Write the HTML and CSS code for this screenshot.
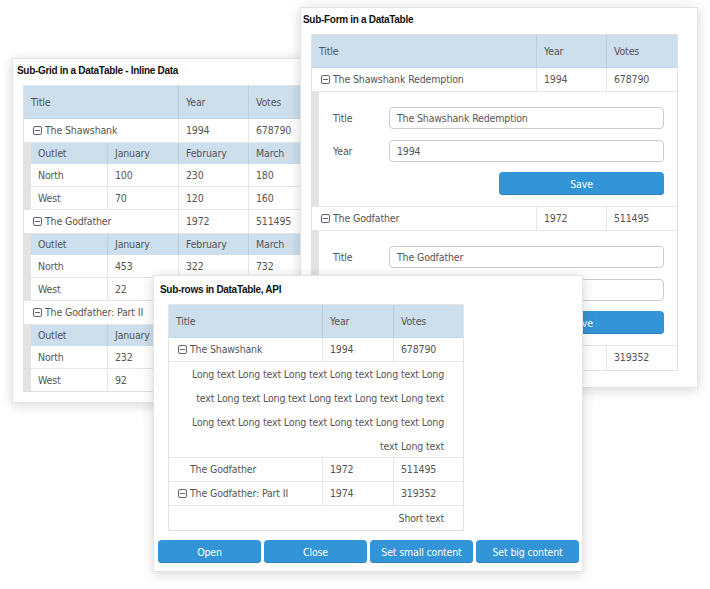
FILE: index.html
```html
<!DOCTYPE html>
<html>
<head>
<meta charset="utf-8">
<link rel="stylesheet" href="styles.css">
</head>
<body>
<div class="desk">

  <!-- Window 1: Sub-Grid -->
  <section class="win win1">
    <div class="wtitle">Sub-Grid in a DataTable - Inline Data</div>
    <div class="grid g1">
      <div class="hrow"><div class="c1">Title</div><div class="c2">Year</div><div class="c3">Votes</div></div>
      <div class="row"><div class="c1 ico"><svg class="ic" width="9" height="9" viewBox="0 0 9 9"><rect x="0.5" y="0.5" width="8" height="8" rx="1.5"/><line x1="2" y1="4.5" x2="7" y2="4.5"/></svg>The Shawshank</div><div class="c2">1994</div><div class="c3">678790</div></div>
      <div class="sub">
        <div class="bar"></div>
        <div class="inner">
          <div class="shrow"><div class="s1">Outlet</div><div class="s2">January</div><div class="s3">February</div><div class="s4">March</div></div>
          <div class="srow"><div class="s1">North</div><div class="s2">100</div><div class="s3">230</div><div class="s4">180</div></div>
          <div class="srow last"><div class="s1">West</div><div class="s2">70</div><div class="s3">120</div><div class="s4">160</div></div>
        </div>
      </div>
      <div class="row"><div class="c1 ico"><svg class="ic" width="9" height="9" viewBox="0 0 9 9"><rect x="0.5" y="0.5" width="8" height="8" rx="1.5"/><line x1="2" y1="4.5" x2="7" y2="4.5"/></svg>The Godfather</div><div class="c2">1972</div><div class="c3">511495</div></div>
      <div class="sub">
        <div class="bar"></div>
        <div class="inner">
          <div class="shrow"><div class="s1">Outlet</div><div class="s2">January</div><div class="s3">February</div><div class="s4">March</div></div>
          <div class="srow"><div class="s1">North</div><div class="s2">453</div><div class="s3">322</div><div class="s4">732</div></div>
          <div class="srow last"><div class="s1">West</div><div class="s2">22</div><div class="s3">75</div><div class="s4">120</div></div>
        </div>
      </div>
      <div class="row"><div class="c1 ico"><svg class="ic" width="9" height="9" viewBox="0 0 9 9"><rect x="0.5" y="0.5" width="8" height="8" rx="1.5"/><line x1="2" y1="4.5" x2="7" y2="4.5"/></svg>The Godfather: Part II</div><div class="c2">1974</div><div class="c3">319352</div></div>
      <div class="sub lastsub">
        <div class="bar"></div>
        <div class="inner">
          <div class="shrow"><div class="s1">Outlet</div><div class="s2">January</div><div class="s3">February</div><div class="s4">March</div></div>
          <div class="srow"><div class="s1">North</div><div class="s2">232</div><div class="s3">140</div><div class="s4">210</div></div>
          <div class="srow last"><div class="s1">West</div><div class="s2">92</div><div class="s3">85</div><div class="s4">67</div></div>
        </div>
      </div>
    </div>
  </section>

  <!-- Window 2: Sub-Form -->
  <section class="win win2">
    <div class="wtitle">Sub-Form in a DataTable</div>
    <div class="grid g2">
      <div class="hrow"><div class="c1">Title</div><div class="c2">Year</div><div class="c3">Votes</div></div>
      <div class="row"><div class="c1 ico"><svg class="ic" width="9" height="9" viewBox="0 0 9 9"><rect x="0.5" y="0.5" width="8" height="8" rx="1.5"/><line x1="2" y1="4.5" x2="7" y2="4.5"/></svg>The Shawshank Redemption</div><div class="c2">1994</div><div class="c3">678790</div></div>
      <div class="subform">
        <div class="bar"></div>
        <div class="form">
          <div class="frow"><label class="flabel">Title</label><div class="finput">The Shawshank Redemption</div></div>
          <div class="frow"><label class="flabel">Year</label><div class="finput">1994</div></div>
          <div class="fbtn"><button class="btn save">Save</button></div>
        </div>
      </div>
      <div class="row"><div class="c1 ico"><svg class="ic" width="9" height="9" viewBox="0 0 9 9"><rect x="0.5" y="0.5" width="8" height="8" rx="1.5"/><line x1="2" y1="4.5" x2="7" y2="4.5"/></svg>The Godfather</div><div class="c2">1972</div><div class="c3">511495</div></div>
      <div class="subform">
        <div class="bar"></div>
        <div class="form">
          <div class="frow"><label class="flabel">Title</label><div class="finput">The Godfather</div></div>
          <div class="frow"><label class="flabel">Year</label><div class="finput">1972</div></div>
          <div class="fbtn"><button class="btn save">Save</button></div>
        </div>
      </div>
      <div class="row lastrow"><div class="c1 ico"><svg class="ic" width="9" height="9" viewBox="0 0 9 9"><rect x="0.5" y="0.5" width="8" height="8" rx="1.5"/><line x1="2" y1="4.5" x2="7" y2="4.5"/></svg>The Godfather: Part II</div><div class="c2">1974</div><div class="c3">319352</div></div>
    </div>
  </section>

  <!-- Window 3: Sub-rows -->
  <section class="win win3">
    <div class="wtitle">Sub-rows in DataTable, API</div>
    <div class="grid g3">
      <div class="hrow"><div class="c1">Title</div><div class="c2">Year</div><div class="c3">Votes</div></div>
      <div class="row"><div class="c1 ico"><svg class="ic" width="9" height="9" viewBox="0 0 9 9"><rect x="0.5" y="0.5" width="8" height="8" rx="1.5"/><line x1="2" y1="4.5" x2="7" y2="4.5"/></svg>The Shawshank</div><div class="c2">1994</div><div class="c3">678790</div></div>
      <div class="subtext long">Long text Long text Long text Long text Long text Long<br>text Long text Long text Long text Long text Long text<br>Long text Long text Long text Long text Long text Long<br>text Long text</div>
      <div class="row"><div class="c1 ico"><span class="icspace"></span>The Godfather</div><div class="c2">1972</div><div class="c3">511495</div></div>
      <div class="row"><div class="c1 ico"><svg class="ic" width="9" height="9" viewBox="0 0 9 9"><rect x="0.5" y="0.5" width="8" height="8" rx="1.5"/><line x1="2" y1="4.5" x2="7" y2="4.5"/></svg>The Godfather: Part II</div><div class="c2">1974</div><div class="c3">319352</div></div>
      <div class="subtext short">Short text</div>
    </div>
    <div class="btns">
      <button class="btn">Open</button>
      <button class="btn">Close</button>
      <button class="btn">Set small content</button>
      <button class="btn">Set big content</button>
    </div>
  </section>

</div>
</body>
</html>
```

FILE: styles.css
```css
* { box-sizing: border-box; }

html, body {
  margin: 0;
  padding: 0;
  background: #ffffff;
}

body {
  font-family: "DejaVu Sans Condensed", "Liberation Sans", sans-serif;
  font-size: 10.5px;
  letter-spacing: -0.15px;
  color: #555555;
}

.desk {
  position: relative;
  width: 710px;
  height: 589px;
  overflow: hidden;
}

.win {
  position: absolute;
  background: #ffffff;
  border: 1px solid #e4e4e4;
  box-shadow: 0 2px 12px rgba(0, 0, 0, 0.16);
}

.win1 { left: 12px; top: 58px; width: 310px; height: 345px; z-index: 1; }
.win2 { left: 300px; top: 7px; width: 398px; height: 381px; z-index: 2; }
.win3 { left: 153px; top: 275px; width: 430px; height: 297px; z-index: 3; }

.wtitle {
  font-family: "Liberation Sans", Arial, sans-serif;
  font-weight: bold;
  font-size: 10px;
  letter-spacing: -0.3px;
  color: #111111;
  height: 26px;
  line-height: 23px;
  white-space: nowrap;
}
.win1 .wtitle { padding-left: 4px; }
.win2 .wtitle { padding-left: 2px; }
.win3 .wtitle { padding-left: 6px; height: 28px; line-height: 27px; }

.grid {
  border: 1px solid #e2e2e2;
  background: #ffffff;
}
.g1 { margin-left: 10px; width: 296px; }
.g2 { margin-left: 10px; width: 367px; }
.g3 { margin-left: 14px; width: 296px; }

.hrow {
  display: flex;
  height: 33px;
  background: #cddeec;
  border-bottom: 1px solid #c3d6e6;
}
.hrow > div {
  line-height: 32px;
  padding-left: 7px;
  border-right: 1px solid #b9cfe1;
  white-space: nowrap;
}
.hrow > div:last-child { border-right: none; }

.row {
  display: flex;
  height: 24px;
  border-bottom: 1px solid #e6e6e6;
}
.row > div {
  line-height: 23px;
  padding-left: 7px;
  border-right: 1px solid #e6e6e6;
  white-space: nowrap;
  overflow: hidden;
}
.row > div:last-child { border-right: none; }
.row > div.ico { padding-left: 9px; }
.lastrow { border-bottom: none; }

.c3 { flex: 1; }
.g1 .c1 { width: 155px; }
.g1 .c2 { width: 70px; }
.g2 .c1 { width: 225px; }
.g2 .c2 { width: 70px; }
.g3 .c1 { width: 154px; }
.g3 .c2 { width: 71px; }

.ic {
  display: inline-block;
  vertical-align: -1px;
  margin-right: 3px;
  fill: none;
  stroke: #666666;
  stroke-width: 1;
}
.icspace {
  display: inline-block;
  width: 12px;
}

/* sub grid */
.sub {
  display: flex;
  border-bottom: 1px solid #e6e6e6;
}
.lastsub { border-bottom: none; }
.bar {
  width: 7px;
  flex: none;
  background: #e3e3e3;
}
.inner { flex: 1; }
.shrow {
  display: flex;
  height: 21px;
  background: #cddeec;
}
.shrow > div {
  line-height: 21px;
  padding-left: 7px;
  border-right: 1px solid #b9cfe1;
  white-space: nowrap;
}
.srow {
  display: flex;
  height: 23px;
  border-bottom: 1px solid #e6e6e6;
}
.srow.last { height: 22px; border-bottom: none; }
.srow > div {
  line-height: 23px;
  padding-left: 7px;
  border-right: 1px solid #e6e6e6;
  white-space: nowrap;
}
.s1 { width: 77px; }
.s2 { width: 71px; }
.s3 { width: 70px; }
.s4 { flex: 1; border-right: none !important; }

/* sub form */
.subform {
  display: flex;
  border-bottom: 1px solid #e6e6e6;
}
.form {
  flex: 1;
  padding: 15px 13px 11px 14px;
}
.frow {
  display: flex;
  align-items: center;
  height: 22px;
  margin-bottom: 11px;
}
.flabel {
  width: 56px;
  flex: none;
}
.finput {
  flex: 1;
  height: 22px;
  line-height: 20px;
  border: 1px solid #cccccc;
  border-radius: 4px;
  padding-left: 7px;
  color: #555555;
  white-space: nowrap;
}
.fbtn {
  display: flex;
  justify-content: flex-end;
  margin-top: -1px;
}

.btn {
  font-family: inherit;
  font-size: 10.5px;
  letter-spacing: -0.15px;
  color: #ffffff;
  background: #3394d7;
  border: none;
  border-radius: 4px;
  box-shadow: inset 0 -1px 0 #2b83c0;
  height: 23px;
  padding: 0;
  cursor: pointer;
}
.save { width: 165px; }

/* sub rows */
.subtext {
  text-align: right;
  padding-right: 19px;
  line-height: 24px;
  border-bottom: 1px solid #e6e6e6;
  white-space: nowrap;
}
.subtext.long { height: 96px; }
.subtext.short { height: 24px; border-bottom: none; }

.btns {
  display: flex;
  gap: 3px;
  padding-left: 4px;
  margin-top: 9px;
}
.btns .btn { width: 103px; }
```
